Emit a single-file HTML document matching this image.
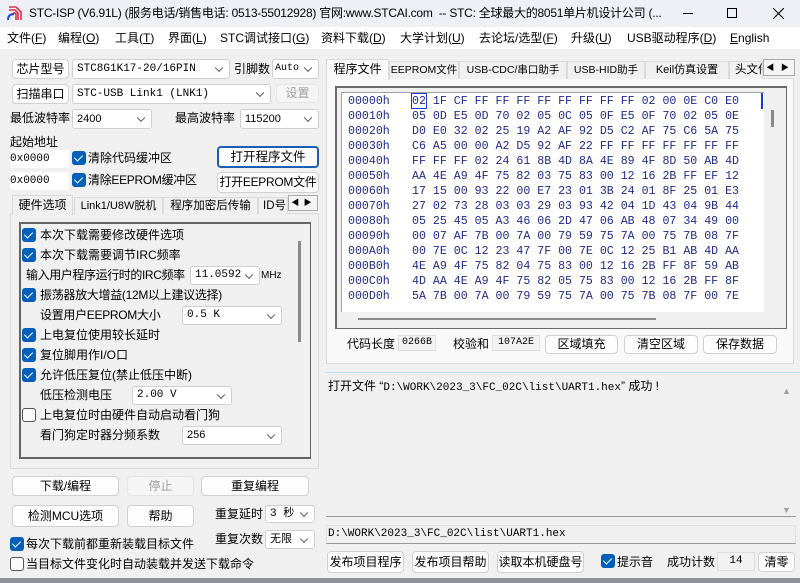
<!DOCTYPE html>
<html><head><meta charset="utf-8"><style>
*{margin:0;padding:0;box-sizing:border-box}
html,body{width:800px;height:583px;overflow:hidden}
body{background:#f0f0f0;font-family:"Liberation Sans","Noto Sans CJK SC",sans-serif;font-size:12px;line-height:15px;color:#000;position:relative}
.a{position:absolute;white-space:nowrap}
.t{font-size:12px}
.btn{position:absolute;background:#fdfdfd;border:1px solid #d0d0d0;border-radius:4px;text-align:center;font-size:12px;white-space:nowrap;overflow:hidden}
.dis{background:#f5f5f5;color:#a0a0a0;border-color:#e5e5e5}
.cmb{position:absolute;background:#fff;border:1px solid #cfcfcf;border-radius:3px;font-family:"Liberation Mono","Noto Sans CJK SC",monospace;font-size:11px;padding-left:4px;white-space:nowrap;overflow:hidden}
.cmb:after{content:"";position:absolute;right:7px;top:50%;width:5px;height:5px;border-right:1px solid #555;border-bottom:1px solid #555;transform:translateY(-70%) rotate(45deg)}
.cb{position:absolute;width:14px;height:14px;background:#005fb8;border-radius:3px}
.cb:after{content:"";position:absolute;left:4px;top:2px;width:4px;height:7px;border-right:1.5px solid #fff;border-bottom:1.5px solid #fff;transform:rotate(45deg)}
.cbu{position:absolute;width:14px;height:14px;border:1px solid #555;border-radius:3px;background:#fafafa}
.tab{position:absolute;border:1px solid #dadada;border-bottom:none;background:#f0f0f0;font-size:11.5px;text-align:center;white-space:nowrap;overflow:hidden}
.mono{font-family:"Liberation Mono","Noto Sans CJK SC",monospace}
.hex{position:absolute;font-family:"Liberation Mono",monospace;font-size:11.6px;color:#1f2a8a;white-space:pre;line-height:15px}
u{text-decoration:underline}
</style></head><body>
<div class="a" style="left:0;top:0;width:800px;height:27px;background:#eef0f6"></div>
<svg class="a" style="left:7px;top:5px" width="16" height="16" viewBox="0 0 16 16"><g stroke="#e0304a" stroke-width="1.6" fill="none"><path d="M2 2h7l5 5v8"/><path d="M2 5h6l3 3v7"/><path d="M6 8h2l1 1v6"/></g><path d="M1 15c0-4 2-6 6-6" stroke="#1b4fd8" stroke-width="2" fill="none"/></svg>
<div class="a" style="left:29px;top:6px;font-size:12px;letter-spacing:-0.25px">STC-ISP (V6.91L) (服务电话/销售电话: 0513-55012928) 官网:www.STCAI.com&nbsp; -- STC: 全球最大的8051单片机设计公司 (...</div>
<div class="a" style="left:683px;top:13px;width:10px;height:1px;background:#000"></div>
<div class="a" style="left:727px;top:8px;width:10px;height:10px;border:1px solid #000"></div>
<svg class="a" style="left:773px;top:8px" width="11" height="11"><path d="M0 0L11 11M11 0L0 11" stroke="#000" stroke-width="1.1"/></svg>
<div class="a" style="left:0;top:27px;width:800px;height:22px;background:#fff"></div>
<div class="a t" style="left:7px;top:31px">文件(<u>F</u>)</div>
<div class="a t" style="left:58px;top:31px">编程(<u>O</u>)</div>
<div class="a t" style="left:115px;top:31px">工具(<u>T</u>)</div>
<div class="a t" style="left:168px;top:31px">界面(<u>L</u>)</div>
<div class="a t" style="left:220px;top:31px">STC调试接口(<u>G</u>)</div>
<div class="a t" style="left:321px;top:31px">资料下载(<u>D</u>)</div>
<div class="a t" style="left:400px;top:31px">大学计划(<u>U</u>)</div>
<div class="a t" style="left:479px;top:31px">去论坛/选型(<u>F</u>)</div>
<div class="a t" style="left:571px;top:31px">升级(<u>U</u>)</div>
<div class="a t" style="left:627px;top:31px">USB驱动程序(<u>D</u>)</div>
<div class="a t" style="left:730px;top:31px"><u>E</u>nglish</div>

<div class="btn" style="left:12px;top:59px;width:57px;height:20px;line-height:18px">芯片型号</div>
<div class="cmb" style="left:72px;top:59px;width:158px;height:20px;line-height:18px">STC8G1K17-20/16PIN</div>
<div class="a t" style="left:234px;top:62px">引脚数</div>
<div class="cmb" style="left:272px;top:59px;width:47px;height:20px;line-height:18px;font-size:10px;padding-left:2px">Auto</div>
<div class="btn" style="left:12px;top:84px;width:57px;height:20px;line-height:18px">扫描串口</div>
<div class="cmb" style="left:72px;top:84px;width:199px;height:20px;line-height:18px">STC-USB Link1 (LNK1)</div>
<div class="btn dis" style="left:276px;top:84px;width:43px;height:19px;line-height:17px">设置</div>
<div class="a t" style="left:10px;top:111px">最低波特率</div>
<div class="cmb" style="left:72px;top:109px;width:80px;height:20px;line-height:18px;font-family:'Liberation Sans'">2400</div>
<div class="a t" style="left:175px;top:111px">最高波特率</div>
<div class="cmb" style="left:240px;top:109px;width:79px;height:20px;line-height:18px;font-family:'Liberation Sans'">115200</div>
<div class="a t" style="left:10px;top:135px">起始地址</div>
<div class="a mono" style="left:10px;top:150px;width:59px;height:18px;background:#fff;line-height:18px;font-size:11px">0x0000</div>
<div class="cb" style="left:72px;top:151px"></div>
<div class="a t" style="left:88px;top:151px">清除代码缓冲区</div>
<div class="btn" style="left:217px;top:146px;width:102px;height:22px;line-height:18px;border:2px solid #1a5fb4;font-size:12.5px">打开程序文件</div>
<div class="a mono" style="left:10px;top:172px;width:59px;height:18px;background:#fff;line-height:18px;font-size:11px">0x0000</div>
<div class="cb" style="left:72px;top:173px"></div>
<div class="a t" style="left:88px;top:173px;letter-spacing:-0.3px">清除EEPROM缓冲区</div>
<div class="btn" style="left:217px;top:172px;width:102px;height:21px;line-height:19px;letter-spacing:-0.3px">打开EEPROM文件</div>

<div class="a" style="left:10px;top:213px;width:309px;height:256px;border:1px solid #dadada;background:#f0f0f0"></div>
<div class="tab" style="left:12px;top:195px;width:61px;height:20px;line-height:19px;font-size:12px">硬件选项</div>
<div class="tab" style="left:74px;top:197px;width:89px;height:17px;line-height:16px;font-size:11px">Link1/U8W脱机</div>
<div class="tab" style="left:163px;top:197px;width:95px;height:17px;line-height:16px;font-size:11.5px">程序加密后传输</div>
<div class="tab" style="left:258px;top:197px;width:30px;height:17px;line-height:16px;text-align:left;padding-left:4px">ID号</div>
<div class="a" style="left:288px;top:195px;width:30px;height:16px;border:1px solid #aaa;background:#f4f4f4;font-size:8px;line-height:14px">&nbsp;◀&nbsp;&nbsp;▶</div>
<div class="a" style="left:19px;top:222px;width:292px;height:237px;border:2px solid #646464;border-right-width:1px"></div>
<div class="a" style="left:298px;top:241px;width:3px;height:101px;background:#8a8a8a"></div>
<div class="cb" style="left:22px;top:228px"></div><div class="a t" style="left:40px;top:228px">本次下载需要修改硬件选项</div>
<div class="cb" style="left:22px;top:248px"></div><div class="a t" style="left:40px;top:248px">本次下载需要调节IRC频率</div>
<div class="a t" style="left:26px;top:268px;letter-spacing:-0.4px">输入用户程序运行时的IRC频率</div>
<div class="cmb" style="left:190px;top:266px;width:70px;height:19px;line-height:17px;font-family:'Liberation Mono'">11.0592</div>
<div class="a" style="left:261px;top:268px;font-size:10px">MHz</div>
<div class="cb" style="left:22px;top:288px"></div><div class="a t" style="left:40px;top:288px;letter-spacing:-0.3px">振荡器放大增益(12M以上建议选择)</div>
<div class="a t" style="left:40px;top:308px;letter-spacing:-0.3px">设置用户EEPROM大小</div>
<div class="cmb" style="left:182px;top:306px;width:100px;height:19px;line-height:17px">0.5 K</div>
<div class="cb" style="left:22px;top:328px"></div><div class="a t" style="left:40px;top:328px">上电复位使用较长延时</div>
<div class="cb" style="left:22px;top:348px"></div><div class="a t" style="left:40px;top:348px">复位脚用作I/O口</div>
<div class="cb" style="left:22px;top:368px"></div><div class="a t" style="left:40px;top:368px">允许低压复位(禁止低压中断)</div>
<div class="a t" style="left:40px;top:388px">低压检测电压</div>
<div class="cmb" style="left:132px;top:386px;width:100px;height:19px;line-height:17px">2.00 V</div>
<div class="cbu" style="left:22px;top:408px"></div><div class="a t" style="left:40px;top:408px">上电复位时由硬件自动启动看门狗</div>
<div class="a t" style="left:40px;top:428px">看门狗定时器分频系数</div>
<div class="cmb" style="left:182px;top:426px;width:100px;height:19px;line-height:17px;font-family:'Liberation Sans'">256</div>

<div class="btn" style="left:12px;top:476px;width:107px;height:20px;line-height:18px">下载/编程</div>
<div class="btn dis" style="left:127px;top:476px;width:67px;height:20px;line-height:18px">停止</div>
<div class="btn" style="left:201px;top:476px;width:108px;height:20px;line-height:18px">重复编程</div>
<div class="btn" style="left:12px;top:505px;width:107px;height:22px;line-height:20px">检测MCU选项</div>
<div class="btn" style="left:127px;top:505px;width:67px;height:22px;line-height:20px">帮助</div>
<div class="a t" style="left:215px;top:507px">重复延时</div>
<div class="cmb" style="left:265px;top:505px;width:50px;height:18px;line-height:16px">3 秒</div>
<div class="cb" style="left:10px;top:537px"></div><div class="a t" style="left:26px;top:537px">每次下载前都重新装载目标文件</div>
<div class="a t" style="left:215px;top:532px">重复次数</div>
<div class="cmb" style="left:265px;top:530px;width:50px;height:19px;line-height:17px;font-family:'Liberation Sans','Noto Sans CJK SC'">无限</div>
<div class="cbu" style="left:10px;top:557px"></div><div class="a t" style="left:26px;top:557px">当目标文件变化时自动装载并发送下载命令</div>

<div class="a" style="left:326px;top:78px;width:468px;height:286px;border:1px solid #dadada;background:#f9f9f9"></div>
<div class="tab" style="left:326px;top:59px;width:63px;height:21px;line-height:19px;background:#f9f9f9;font-size:12px">程序文件</div>
<div class="tab" style="left:389px;top:61px;width:70px;height:18px;line-height:17px;font-size:10.5px">EEPROM文件</div>
<div class="tab" style="left:459px;top:61px;width:108px;height:18px;line-height:17px;font-size:10.5px">USB-CDC/串口助手</div>
<div class="tab" style="left:567px;top:61px;width:78px;height:18px;line-height:17px;font-size:10.5px">USB-HID助手</div>
<div class="tab" style="left:645px;top:61px;width:84px;height:18px;line-height:17px;font-size:11px">Keil仿真设置</div>
<div class="tab" style="left:729px;top:61px;width:34px;height:18px;line-height:17px;text-align:left;padding-left:5px">头文件</div>
<div class="a" style="left:763px;top:59px;width:32px;height:17px;border:1px solid #aaa;background:#f4f4f4;font-size:8px;line-height:15px">&nbsp;◀&nbsp;&nbsp;&nbsp;▶</div>
<div class="a" style="left:335px;top:86px;width:452px;height:243px;border:2px solid #6a6a6a;border-right-width:1px;border-bottom-width:1px;background:#f0f0f0"></div>
<div class="a" style="left:341px;top:92px;width:423px;height:220px;background:#fff;border-top:1px solid #a0a0a0;border-left:1px solid #a0a0a0"></div>
<div class="a" style="left:771px;top:110px;width:3px;height:17px;background:#8a8a8a"></div>
<div class="a" style="left:358px;top:318px;width:298px;height:2px;background:#8a8a8a"></div>
<div class="a" style="left:411px;top:93px;width:16px;height:16px;border:1px solid #1a3ad8"></div>
<div class="a" style="left:761px;top:93px;width:2px;height:16px;background:#1a3ad8"></div>
<div class="hex" style="top:94px;left:348px">00000h
00010h
00020h
00030h
00040h
00050h
00060h
00070h
00080h
00090h
000A0h
000B0h
000C0h
000D0h</div>
<div class="hex" style="top:94px;left:412px">02 1F CF FF FF FF FF FF FF FF FF 02 00 0E C0 E0
05 0D E5 0D 70 02 05 0C 05 0F E5 0F 70 02 05 0E
D0 E0 32 02 25 19 A2 AF 92 D5 C2 AF 75 C6 5A 75
C6 A5 00 00 A2 D5 92 AF 22 FF FF FF FF FF FF FF
FF FF FF 02 24 61 8B 4D 8A 4E 89 4F 8D 50 AB 4D
AA 4E A9 4F 75 82 03 75 83 00 12 16 2B FF EF 12
17 15 00 93 22 00 E7 23 01 3B 24 01 8F 25 01 E3
27 02 73 28 03 03 29 03 93 42 04 1D 43 04 9B 44
05 25 45 05 A3 46 06 2D 47 06 AB 48 07 34 49 00
00 07 AF 7B 00 7A 00 79 59 75 7A 00 75 7B 08 7F
00 7E 0C 12 23 47 7F 00 7E 0C 12 25 B1 AB 4D AA
4E A9 4F 75 82 04 75 83 00 12 16 2B FF 8F 59 AB
4D AA 4E A9 4F 75 82 05 75 83 00 12 16 2B FF 8F
5A 7B 00 7A 00 79 59 75 7A 00 75 7B 08 7F 00 7E</div>
<div class="a t" style="left:347px;top:337px">代码长度</div>
<div class="a mono" style="left:398px;top:335px;width:38px;height:16px;background:#f2f2f2;border:1px solid #ddd;font-size:10px;line-height:14px;text-align:center">0266B</div>
<div class="a t" style="left:453px;top:337px">校验和</div>
<div class="a mono" style="left:492px;top:335px;width:48px;height:16px;background:#f2f2f2;border:1px solid #ddd;font-size:10px;line-height:14px;text-align:center">107A2E</div>
<div class="btn" style="left:545px;top:335px;width:73px;height:19px;line-height:17px">区域填充</div>
<div class="btn" style="left:624px;top:335px;width:74px;height:19px;line-height:17px">清空区域</div>
<div class="btn" style="left:703px;top:335px;width:74px;height:19px;line-height:17px">保存数据</div>

<div class="a" style="left:325px;top:372px;width:475px;height:1px;background:#bfe0f5"></div>
<div class="a" style="left:326px;top:378px;width:470px;height:139px;border-bottom:1px solid #999;background:#f0f0f0"></div>
<div class="a t" style="left:328px;top:379px">打开文件 “<span class="mono" style="font-size:11px">D:\WORK\2023_3\FC_02C\list\UART1.hex</span>” 成功 !</div>
<div class="a" style="left:782px;top:384px;font-size:9px;color:#a0a0a0">▲</div>
<div class="a" style="left:782px;top:503px;font-size:9px;color:#a0a0a0">▼</div>
<div class="a mono" style="left:326px;top:525px;width:470px;height:19px;background:#f0f0f0;border:1px solid #e0e0e0;border-bottom:1px solid #999;font-size:11px;line-height:17px;padding-left:1px">D:\WORK\2023_3\FC_02C\list\UART1.hex</div>
<div class="btn" style="left:327px;top:551px;width:77px;height:22px;line-height:20px">发布项目程序</div>
<div class="btn" style="left:412px;top:551px;width:77px;height:22px;line-height:20px">发布项目帮助</div>
<div class="btn" style="left:497px;top:551px;width:87px;height:22px;line-height:20px">读取本机硬盘号</div>
<div class="cb" style="left:601px;top:554px"></div>
<div class="a t" style="left:617px;top:555px">提示音</div>
<div class="a t" style="left:667px;top:555px">成功计数</div>
<div class="a mono" style="left:717px;top:552px;width:38px;height:19px;background:#f2f2f2;border:1px solid #ddd;font-size:11px;line-height:17px;text-align:center">14</div>
<div class="btn" style="left:758px;top:552px;width:37px;height:20px;line-height:18px">清零</div>
<div class="a" style="left:0;top:578px;width:800px;height:5px;background:#8e9298"></div>
</body></html>
